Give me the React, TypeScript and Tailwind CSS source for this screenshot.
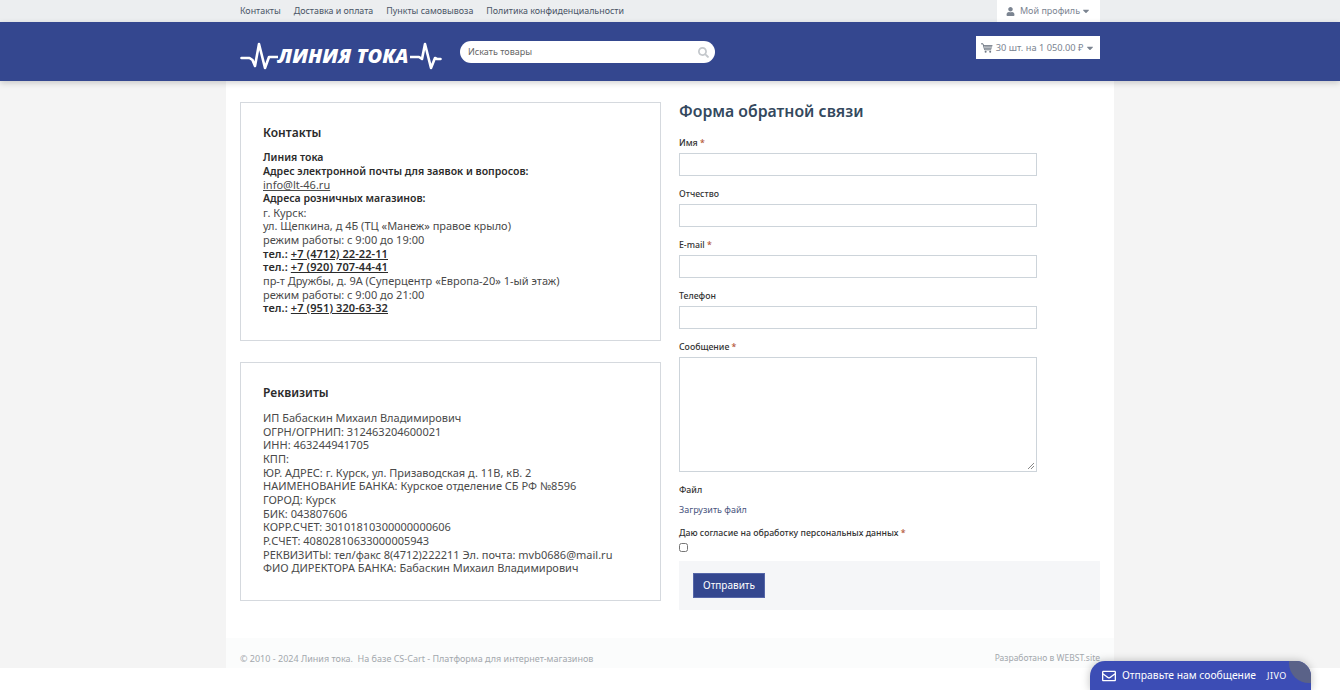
import { FaUser, FaCaretDown, FaSearch, FaRegEnvelope } from "react-icons/fa";

const font = "font-['Noto_Sans','Open_Sans',sans-serif]";
const cardStyle = "h-[239px] border border-[#d5d9de] px-[22px] pt-[22px] text-[#4a4a4a] leading-[13.65px]";
const cardTitle = "mb-[10px] text-[12px] leading-[16px] font-semibold text-[#2b2b2b]";
const strong = "text-[10.5px] font-semibold text-[#2b2b2b]";

function Label({ text, required }: { text: string; required?: boolean }) {
  return (
    <div className="text-[8.75px] leading-[13px] font-medium text-[#333]">
      {text}
      {required && <span className="text-[#b5573a]"> *</span>}
    </div>
  );
}

function Field({ text, required }: { text: string; required?: boolean }) {
  return (
    <div className="mb-[12px] w-[358px]">
      <Label text={text} required={required} />
      <div className="mt-[3px] h-[23px] border border-[#cdd4da] bg-white" />
    </div>
  );
}

function Phone({ number }: { number: string }) {
  return (
    <div className="font-semibold tracking-[0.1px] text-[#2b2b2b]">
      тел.: <span className="underline">{number}</span>
    </div>
  );
}

function Logo() {
  return (
    <div className="flex h-[30px] w-[202px] items-center">
      <svg width="38" height="30" viewBox="0 0 38 30" className="shrink-0">
        <path
          d="M1.5 17h8l3 2 2.5 6 4-22 6 24 4-11h9"
          fill="none"
          stroke="#fff"
          strokeWidth="2.6"
          strokeLinejoin="round"
          strokeLinecap="round"
        />
      </svg>
      <span className="w-[132px] font-['Open_Sans',sans-serif] text-[20px] leading-none font-extrabold whitespace-nowrap text-white italic">
        ЛИНИЯ ТОКА
      </span>
      <svg width="32" height="30" viewBox="0 0 32 30" className="shrink-0">
        <path
          d="M0 16h9l3 2 3-15 6 24 4-10 2 1h3.5"
          fill="none"
          stroke="#fff"
          strokeWidth="2.6"
          strokeLinejoin="round"
          strokeLinecap="round"
        />
      </svg>
    </div>
  );
}

function CartIcon() {
  return (
    <svg width="12" height="10" viewBox="0 0 12 10" className="shrink-0">
      <path d="M0 .8h2l1.6 6h6.6" fill="none" stroke="#6f7884" strokeWidth="1" />
      <path d="M2.8 2h8.7l-1 3.8H3.8z" fill="#6f7884" />
      <path d="M3 3.2h8M3.4 4.5h7.4" stroke="#fff" strokeWidth="0.5" />
      <circle cx="4.6" cy="8.8" r="1" fill="#6f7884" />
      <circle cx="9.2" cy="8.8" r="1" fill="#6f7884" />
    </svg>
  );
}

export default function App() {
  return (
    <div className={`relative h-[690px] overflow-hidden bg-white ${font} text-[11px] text-[#444]`}>
      <div className="h-[668px] bg-[#f4f4f4]">
        {/* top bar */}
        <div className="flex h-[22px] justify-center bg-[#eceef0]">
          <div className="flex w-[860px] items-center justify-between">
            <div className="flex gap-[13px] text-[8.9px] text-[#4a5566]">
              <span>Контакты</span>
              <span>Доставка и оплата</span>
              <span>Пункты самовывоза</span>
              <span>Политика конфиденциальности</span>
            </div>
            <div className="flex h-[22px] w-[103px] items-center justify-center gap-[5px] bg-white text-[9px] text-[#7b8491]">
              <FaUser className="text-[9px] text-[#7b8491]" />
              <span>Мой профиль</span>
              <FaCaretDown className="-ml-[4px] text-[10px]" />
            </div>
          </div>
        </div>

        {/* header */}
        <div className="relative z-10 flex h-[59px] justify-center bg-[#34478f] shadow-[0_2px_6px_rgba(0,0,0,0.18)]">
          <div className="flex w-[860px] items-start justify-between">
            <div className="flex items-start">
              <div className="mt-[19px]">
                <Logo />
              </div>
              <div className="mt-[19px] ml-[18px] flex h-[22px] w-[255px] items-center justify-between rounded-full bg-white pr-[6px] pl-[8px] text-[9px] text-[#666]">
                <span>Искать товары</span>
                <FaSearch className="text-[11px] text-[#c4c8cc]" />
              </div>
            </div>
            <div className="mt-[14px] flex h-[23px] w-[124px] items-center justify-center gap-[3px] bg-white text-[9.25px] text-[#7b8491]">
              <CartIcon />
              <span>30 шт. на 1 050.00 ₽</span>
              <FaCaretDown className="-ml-[1px] text-[10px]" />
            </div>
          </div>
        </div>

        {/* content */}
        <div className="mx-auto flex h-[587px] w-[888px] flex-col bg-white">
          <div className="flex flex-1 gap-[18px] px-[14px] pt-[21px]">
            <div className="flex w-[421px] flex-col gap-[21px]">
              <div className={cardStyle}>
                <div className={cardTitle}>Контакты</div>
                <div className={strong}>Линия тока</div>
                <div className={strong}>Адрес электронной почты для заявок и вопросов:</div>
                <div className="underline">info@lt-46.ru</div>
                <div className={strong}>Адреса розничных магазинов:</div>
                <div>г. Курск:</div>
                <div>ул. Щепкина, д 4Б (ТЦ «Манеж» правое крыло)</div>
                <div>режим работы: с 9:00 до 19:00</div>
                <Phone number="+7 (4712) 22-22-11" />
                <Phone number="+7 (920) 707-44-41" />
                <div>пр-т Дружбы, д. 9А (Суперцентр «Европа-20» 1-ый этаж)</div>
                <div>режим работы: с 9:00 до 21:00</div>
                <Phone number="+7 (951) 320-63-32" />
              </div>
              <div className={cardStyle}>
                <div className={cardTitle}>Реквизиты</div>
                <div>ИП Бабаскин Михаил Владимирович</div>
                <div>ОГРН/ОГРНИП: 312463204600021</div>
                <div>ИНН: 463244941705</div>
                <div>КПП:</div>
                <div>ЮР. АДРЕС: г. Курск, ул. Призаводская д. 11В, кВ. 2</div>
                <div>НАИМЕНОВАНИЕ БАНКА: Курское отделение СБ РФ №8596</div>
                <div>ГОРОД: Курск</div>
                <div>БИК: 043807606</div>
                <div>КОРР.СЧЕТ: 30101810300000000606</div>
                <div>Р.СЧЕТ: 40802810633000005943</div>
                <div>РЕКВИЗИТЫ: тел/факс 8(4712)222211 Эл. почта: mvb0686@mail.ru</div>
                <div>ФИО ДИРЕКТОРА БАНКА: Бабаскин Михаил Владимирович</div>
              </div>
            </div>

            <div className="w-[421px]">
              <h1 className="mb-[16px] text-[15.8px] leading-[19px] font-semibold text-[#34495e]">Форма обратной связи</h1>
              <Field text="Имя" required />
              <Field text="Отчество" />
              <Field text="E-mail" required />
              <Field text="Телефон" />
              <div className="w-[358px]">
                <Label text="Сообщение" required />
                <div className="relative mt-[3px] h-[115px] border border-[#cdd4da] bg-white">
                  <svg width="8" height="8" viewBox="0 0 8 8" className="absolute right-[1px] bottom-[1px]">
                    <path d="M1 7l6-6M4 7l3-3" stroke="#888" strokeWidth="1" />
                  </svg>
                </div>
              </div>
              <div className="mt-[12px]">
                <Label text="Файл" />
                <div className="mt-[6px] text-[9px] leading-[13px] text-[#4a5580]">Загрузить файл</div>
              </div>
              <div className="mt-[11px]">
                <Label text="Даю согласие на обработку персональных данных" required />
                <input type="checkbox" className="mt-[3px] block h-[9px] w-[9px]" />
              </div>
              <div className="mt-[9px] h-[49px] bg-[#f5f6f8] px-[14px] pt-[12px]">
                <button className="h-[25px] w-[72px] border border-[#5566a8] bg-[#34478f] text-[10px] text-white">Отправить</button>
              </div>
            </div>
          </div>

          <div className="flex h-[30px] items-end justify-between bg-[#fbfcfc] px-[14px] pb-[3px] text-[9px] text-[#a3a8ad]">
            <span>© 2010 - 2024 Линия тока.&nbsp; На базе CS-Cart - Платформа для интернет-магазинов</span>
            <span className="text-[8.5px]">Разработано в WEBST.site</span>
          </div>
        </div>
      </div>

      {/* chat widget */}
      <div className="absolute right-[29px] bottom-0 flex h-[29px] w-[221px] items-center overflow-hidden rounded-t-[15px] bg-[#3c4db5] pl-[12px] text-white shadow-[0_0_8px_rgba(0,0,0,0.25)]">
        <FaRegEnvelope className="text-[14px]" />
        <span className="ml-[6px] text-[10.3px] whitespace-nowrap">Отправьте нам сообщение</span>
        <span className="ml-[11px] text-[9px] tracking-[0.5px]">JIVO</span>
        <div className="absolute -top-[18px] -right-[18px] h-[40px] w-[40px] rounded-full bg-[#5a6288]" />
      </div>
    </div>
  );
}
